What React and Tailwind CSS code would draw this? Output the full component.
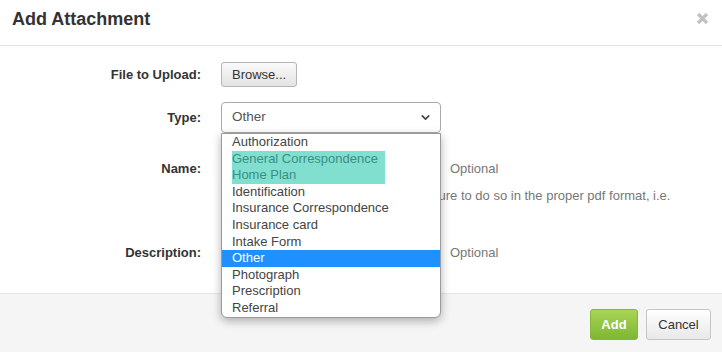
import { ChevronDown } from "lucide-react";

const types = [
  "Authorization",
  "General Correspondence",
  "Home Plan",
  "Identification",
  "Insurance Correspondence",
  "Insurance card",
  "Intake Form",
  "Other",
  "Photograph",
  "Prescription",
  "Referral",
];

function App() {
  return (
    <div className="w-[722px] h-[352px] bg-white flex flex-col overflow-hidden text-[#333]" style={{ fontFamily: '"Liberation Sans", Arial, sans-serif' }}>
      {/* header */}
      <div className="h-[46px] shrink-0 border-b border-[#e5e5e5] flex items-center justify-between pl-[12px] pr-[13px] pb-[6px]">
        <h1 className="text-[18px] font-bold text-[#333]">Add Attachment</h1>
        <svg width="13" height="13" viewBox="0 0 13 13" className="mt-[-2px]">
          <path d="M2 2 L11 11 M11 2 L2 11" stroke="#c2c2c2" strokeWidth="3.2" strokeLinecap="butt" />
        </svg>
      </div>

      {/* body */}
      <div className="flex-1 pt-[16px] text-[13px]">
        <div className="flex items-center h-[25px]">
          <label className="w-[201px] text-right font-bold">File to Upload:</label>
          <button className="ml-[20px] h-[25px] px-[10px] text-[13px] text-[#333] border border-[#b5b5b5] rounded-[3px] bg-gradient-to-b from-[#fafafa] to-[#e3e3e3]">
            Browse...
          </button>
        </div>

        <div className="flex items-center mt-[15px] h-[31px]">
          <label className="w-[201px] text-right font-bold">Type:</label>
          <div className="relative ml-[20px] z-10">
            <div className="w-[220px] h-[31px] border border-[#aaa] rounded-[4px] flex items-center justify-between pl-[10px] pr-[8px] text-[13.5px] text-[#555] bg-white">
              <span>Other</span>
              <ChevronDown size={13} strokeWidth={3} className="text-[#444]" />
            </div>
            <ul className="absolute left-0 top-full w-[220px] bg-white border border-[#9a9a9a] rounded-b-[6px] shadow-[0_3px_10px_rgba(0,0,0,0.3)] overflow-hidden text-[13px] text-[#444]">
              {types.map((t) => (
                <li
                  key={t}
                  className={
                    t === "Other"
                      ? "h-[16.6px] leading-[16.6px] pl-[10px] bg-[#1e90ff] text-white"
                      : "h-[16.6px] leading-[16.6px] pl-[10px]"
                  }
                >
                  {t === "General Correspondence" || t === "Home Plan" ? (
                    <span className="inline-block w-[153px] bg-[#80dfcf] text-[#3b8f85]">{t}</span>
                  ) : (
                    t
                  )}
                </li>
              ))}
            </ul>
          </div>
        </div>

        <div className="flex items-start mt-[22px]">
          <label className="w-[201px] text-right font-bold leading-[28px]">Name:</label>
          <div className="ml-[20px]">
            <div className="flex items-center">
              <input className="w-[220px] h-[28px] border border-[#ccc] rounded-[3px]" />
              <span className="ml-[9px] text-[#777]">Optional</span>
            </div>
            <p className="mt-[5px] w-[460px] leading-[16px] text-[#777] indent-[5px]">
              If uploading a document, please be sure to do so in the proper pdf format, i.e. PDF/A.
            </p>
          </div>
        </div>

        <div className="flex items-center mt-[16px]">
          <label className="w-[201px] text-right font-bold">Description:</label>
          <div className="ml-[20px] flex items-center">
            <textarea className="w-[220px] h-[34px] border border-[#ccc] rounded-[3px] resize-none" />
            <span className="ml-[9px] text-[#777]">Optional</span>
          </div>
        </div>
      </div>

      {/* footer */}
      <div className="h-[59px] shrink-0 border-t border-[#e5e5e5] bg-[#f5f5f5] flex items-center justify-end gap-[8px] pr-[11px] pt-[3px]">
        <button className="w-[48px] h-[31px] rounded-[3px] border border-[#86b63c] bg-gradient-to-b from-[#a9d455] to-[#7fb634] text-white text-[13px] font-bold">
          Add
        </button>
        <button className="w-[65px] h-[31px] rounded-[3px] border border-[#c5c5c5] bg-gradient-to-b from-white to-[#e8e8e8] text-[#333] text-[13px]">
          Cancel
        </button>
      </div>
    </div>
  );
}

export default App;
